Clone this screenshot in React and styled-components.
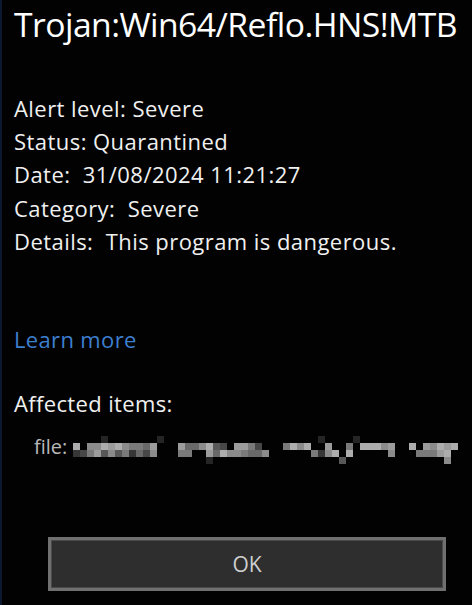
import React from "react";
import styled, { createGlobalStyle } from "styled-components";

const Global = createGlobalStyle`
  html, body { margin: 0; padding: 0; background: #000; }
  body { font-family: "Open Sans", "Noto Sans", sans-serif; }
`;

const Screen = styled.div`
  width: 472px;
  height: 605px;
  box-sizing: border-box;
  background: #020203;
  border-left: 2px solid #0b1830;
  color: #f2f2f2;
  display: flex;
  flex-direction: column;
  padding: 0 0 0 12px;
  overflow: hidden;
`;

const Title = styled.h1`
  margin: 2px 0 0 0;
  font-weight: 400;
  font-size: 33.7px;
  line-height: 44px;
  letter-spacing: -0.55px;
  color: #ffffff;
  white-space: nowrap;
`;

const Details = styled.div`
  margin-top: 46px;
  display: flex;
  flex-direction: column;
`;

const Line = styled.div`
  font-size: 22px;
  line-height: 33.2px;
  color: #f0f0f0;
  white-space: nowrap;
  letter-spacing: 0.45px;
`;

const Link = styled.a`
  margin-top: 65px;
  font-size: 22px;
  line-height: 33px;
  color: #3d7fcf;
  text-decoration: none;
  letter-spacing: 0.35px;
`;

const Section = styled.div`
  margin-top: 31px;
  font-size: 22px;
  line-height: 33px;
  color: #f0f0f0;
  letter-spacing: 0.35px;
`;

const FileRow = styled.div`
  margin-top: 10px;
  padding-left: 20px;
  display: flex;
  align-items: center;
  gap: 6px;
  font-size: 20px;
  line-height: 26px;
  color: #b9b9b9;
`;

const Footer = styled.div`
  margin-top: auto;
  margin-bottom: 14px;
  display: flex;
  justify-content: flex-start;
`;

const Button = styled.button`
  width: 398px;
  height: 54px;
  margin-left: 34px;
  box-sizing: border-box;
  background: #2e2e2e;
  border: 3px solid #707070;
  box-shadow: inset 0 0 0 1px #4a4a4a;
  color: #cfcfcf;
  font-family: "Open Sans", "Noto Sans", sans-serif;
  font-size: 21px;
  padding: 0;
`;

const pattern = [
  "0000100000001000000000000000000000010000100000000000000",
  "9077989766580008557943088630006979008006099978009087989",
  "2368474625370006600859776557000000627909000007000666890",
  "0000000000000000000100000000000000000040000000000000070",
];

function Mosaic() {
  const cell = 7;
  const rects = [];
  pattern.forEach((row, r) => {
    for (let c = 0; c < row.length; c++) {
      const v = parseInt(row[c], 10);
      if (!v) continue;
      const g = Math.round(20 + v * 17);
      rects.push(
        <rect
          key={`${r}-${c}`}
          x={c * cell}
          y={r * cell}
          width={cell}
          height={cell}
          fill={`rgb(${g},${g},${g})`}
        />
      );
    }
  });
  return (
    <svg width={pattern[0].length * cell} height={28} style={{ marginTop: 6 }}>
      {rects}
    </svg>
  );
}

export default function App() {
  return (
    <>
      <Global />
      <Screen>
        <Title>Trojan:Win64/Reflo.HNS!MTB</Title>
        <Details>
          <Line>Alert level: Severe</Line>
          <Line>Status: Quarantined</Line>
          <Line>Date:&nbsp; 31/08/2024 11:21:27</Line>
          <Line>Category:&nbsp; Severe</Line>
          <Line>Details:&nbsp; This program is dangerous.</Line>
        </Details>
        <Link href="#">Learn more</Link>
        <Section>Affected items:</Section>
        <FileRow>
          <span>file:</span>
          <Mosaic />
        </FileRow>
        <Footer>
          <Button>OK</Button>
        </Footer>
      </Screen>
    </>
  );
}
